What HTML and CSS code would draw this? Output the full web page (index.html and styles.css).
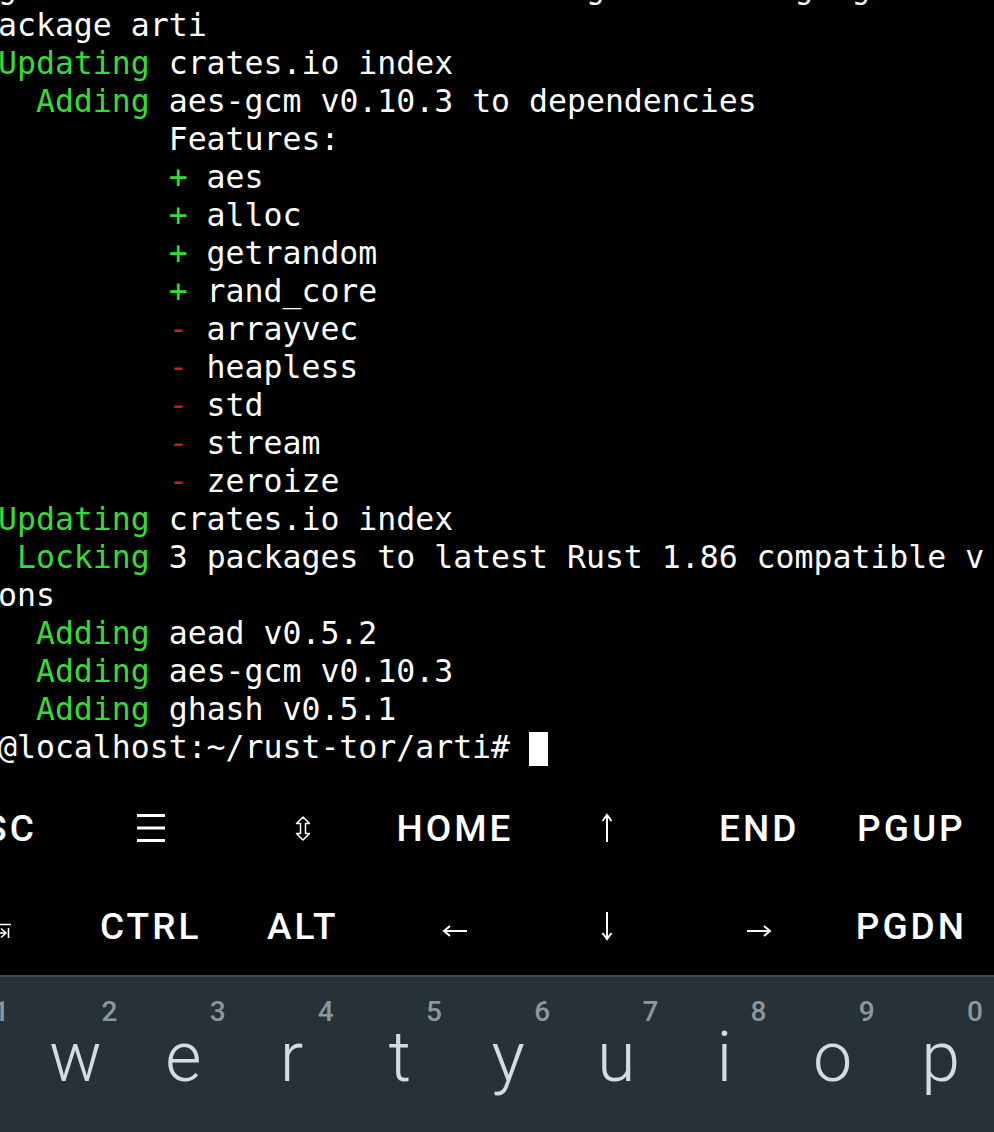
FILE: index.html
```html
<!DOCTYPE html>
<html lang="en">
<head>
    <meta charset="UTF-8">
    <meta name="viewport" content="width=device-width, initial-scale=1.0">
    <title>Termux - arti</title>
    <link rel="stylesheet" href="styles.css">
</head>
<body>
    <div class="screen">
        <div class="term">
            <div class="line">g                              g          g  g</div>
            <div class="line">ackage arti</div>
            <div class="line"><span class="ok">Updating</span> crates.io index</div>
            <div class="line">  <span class="ok">Adding</span> aes-gcm v0.10.3 to dependencies</div>
            <div class="line">         Features:</div>
            <div class="line">         <span class="ok">+</span> aes</div>
            <div class="line">         <span class="ok">+</span> alloc</div>
            <div class="line">         <span class="ok">+</span> getrandom</div>
            <div class="line">         <span class="ok">+</span> rand_core</div>
            <div class="line">         <span class="del">-</span> arrayvec</div>
            <div class="line">         <span class="del">-</span> heapless</div>
            <div class="line">         <span class="del">-</span> std</div>
            <div class="line">         <span class="del">-</span> stream</div>
            <div class="line">         <span class="del">-</span> zeroize</div>
            <div class="line"><span class="ok">Updating</span> crates.io index</div>
            <div class="line"> <span class="ok">Locking</span> 3 packages to latest Rust 1.86 compatible v</div>
            <div class="line">ons</div>
            <div class="line">  <span class="ok">Adding</span> aead v0.5.2</div>
            <div class="line">  <span class="ok">Adding</span> aes-gcm v0.10.3</div>
            <div class="line">  <span class="ok">Adding</span> ghash v0.5.1</div>
            <div class="line">@localhost:~/rust-tor/arti# <span class="cursor"></span></div>
        </div>

        <div class="extra-keys">
            <div class="ek">ESC</div>
            <div class="ek">
                <svg width="28" height="30" viewBox="0 0 28 30"><rect x="0" y="1" width="28" height="3" fill="#fff"/><rect x="0" y="13.5" width="28" height="3" fill="#fff"/><rect x="0" y="26" width="28" height="3" fill="#fff"/></svg>
            </div>
            <div class="ek">
                <svg width="16" height="25" viewBox="0 0 16 25"><path d="M8 1 L14.5 7.5 H10.5 V17.5 H14.5 L8 24 L1.5 17.5 H5.5 V7.5 H1.5 Z" fill="none" stroke="#fff" stroke-width="1.5" stroke-linejoin="round"/></svg>
            </div>
            <div class="ek">HOME</div>
            <div class="ek">
                <svg width="14" height="30" viewBox="0 0 14 30"><path d="M7 29 V2 M2.5 8 L7 2 L11.5 8" fill="none" stroke="#fff" stroke-width="2"/></svg>
            </div>
            <div class="ek">END</div>
            <div class="ek">PGUP</div>

            <div class="ek low">
                <svg width="24" height="16" viewBox="0 0 24 16"><path d="M0 1.5 H24 M2 10 H19 M14 5.5 L19 10 L14 14.5 M21.5 5 V15" fill="none" stroke="#fff" stroke-width="1.6"/></svg>
            </div>
            <div class="ek">CTRL</div>
            <div class="ek">ALT</div>
            <div class="ek low">
                <svg width="26" height="14" viewBox="0 0 26 14"><path d="M25 7 H2 M8 2 L2 7 L8 12" fill="none" stroke="#fff" stroke-width="2"/></svg>
            </div>
            <div class="ek">
                <svg width="14" height="30" viewBox="0 0 14 30"><path d="M7 1 V28 M2.5 22 L7 28 L11.5 22" fill="none" stroke="#fff" stroke-width="2"/></svg>
            </div>
            <div class="ek low">
                <svg width="26" height="14" viewBox="0 0 26 14"><path d="M1 7 H24 M18 2 L24 7 L18 12" fill="none" stroke="#fff" stroke-width="2"/></svg>
            </div>
            <div class="ek">PGDN</div>
        </div>

        <div class="keyboard">
            <div class="kb-row">
                <div class="kb-key"><span class="hint">1</span><span class="letter">q</span></div>
                <div class="kb-key"><span class="hint">2</span><span class="letter">w</span></div>
                <div class="kb-key"><span class="hint">3</span><span class="letter">e</span></div>
                <div class="kb-key"><span class="hint">4</span><span class="letter">r</span></div>
                <div class="kb-key"><span class="hint">5</span><span class="letter">t</span></div>
                <div class="kb-key"><span class="hint">6</span><span class="letter">y</span></div>
                <div class="kb-key"><span class="hint">7</span><span class="letter">u</span></div>
                <div class="kb-key"><span class="hint">8</span><span class="letter">i</span></div>
                <div class="kb-key"><span class="hint">9</span><span class="letter">o</span></div>
                <div class="kb-key"><span class="hint">0</span><span class="letter">p</span></div>
            </div>
        </div>
    </div>
</body>
</html>
```

FILE: styles.css
```css
body {
    margin: 0;
    background-color: #000;
    overflow: hidden;
}
.screen {
    width: 994px;
    height: 1132px;
    overflow: hidden;
    display: flex;
    flex-direction: column;
}

/* terminal */
.term {
    margin-top: -32px;
    margin-left: -2px;
    font-family: 'DejaVu Sans Mono', monospace;
    font-size: 31.5px;
    line-height: 38px;
    color: #fff;
}
.line {
    height: 38px;
    white-space: pre;
}
.ok {
    color: #36dc36;
}
.del {
    color: #d81818;
}
.cursor {
    display: inline-block;
    vertical-align: top;
    width: 19px;
    height: 34px;
    margin-top: 4px;
    background-color: #fff;
}

/* extra keys row */
.extra-keys {
    display: grid;
    grid-template-columns: repeat(7, 152.15px);
    grid-auto-rows: 98px;
    margin-left: -79px;
    padding-top: 13px;
    height: 196px;
    flex-shrink: 0;
    font-family: 'Roboto', sans-serif;
    font-weight: 500;
    font-size: 37px;
    letter-spacing: 3px;
    color: #fff;
}
.ek {
    display: flex;
    justify-content: center;
    align-items: center;
    padding-left: 3px;
}
.ek svg {
    display: block;
}
.ek.low svg {
    margin-top: 10px;
}

/* soft keyboard */
.keyboard {
    flex: 1;
    background-color: #273238;
    border-top: 2px solid #3b454c;
    padding-top: 21px;
}
.kb-row {
    display: grid;
    grid-template-columns: repeat(10, 108.2px);
    margin-left: -87px;
}
.kb-key {
    display: flex;
    flex-direction: column;
}
.hint {
    align-self: flex-end;
    padding-right: 12px;
    font-family: 'Roboto', sans-serif;
    font-weight: 500;
    font-size: 28px;
    line-height: 28px;
    color: #8e979d;
}
.letter {
    margin-top: -4px;
    text-align: center;
    font-family: 'Roboto', sans-serif;
    font-weight: 300;
    font-size: 70px;
    line-height: 70px;
    color: #d6dbde;
}
```
